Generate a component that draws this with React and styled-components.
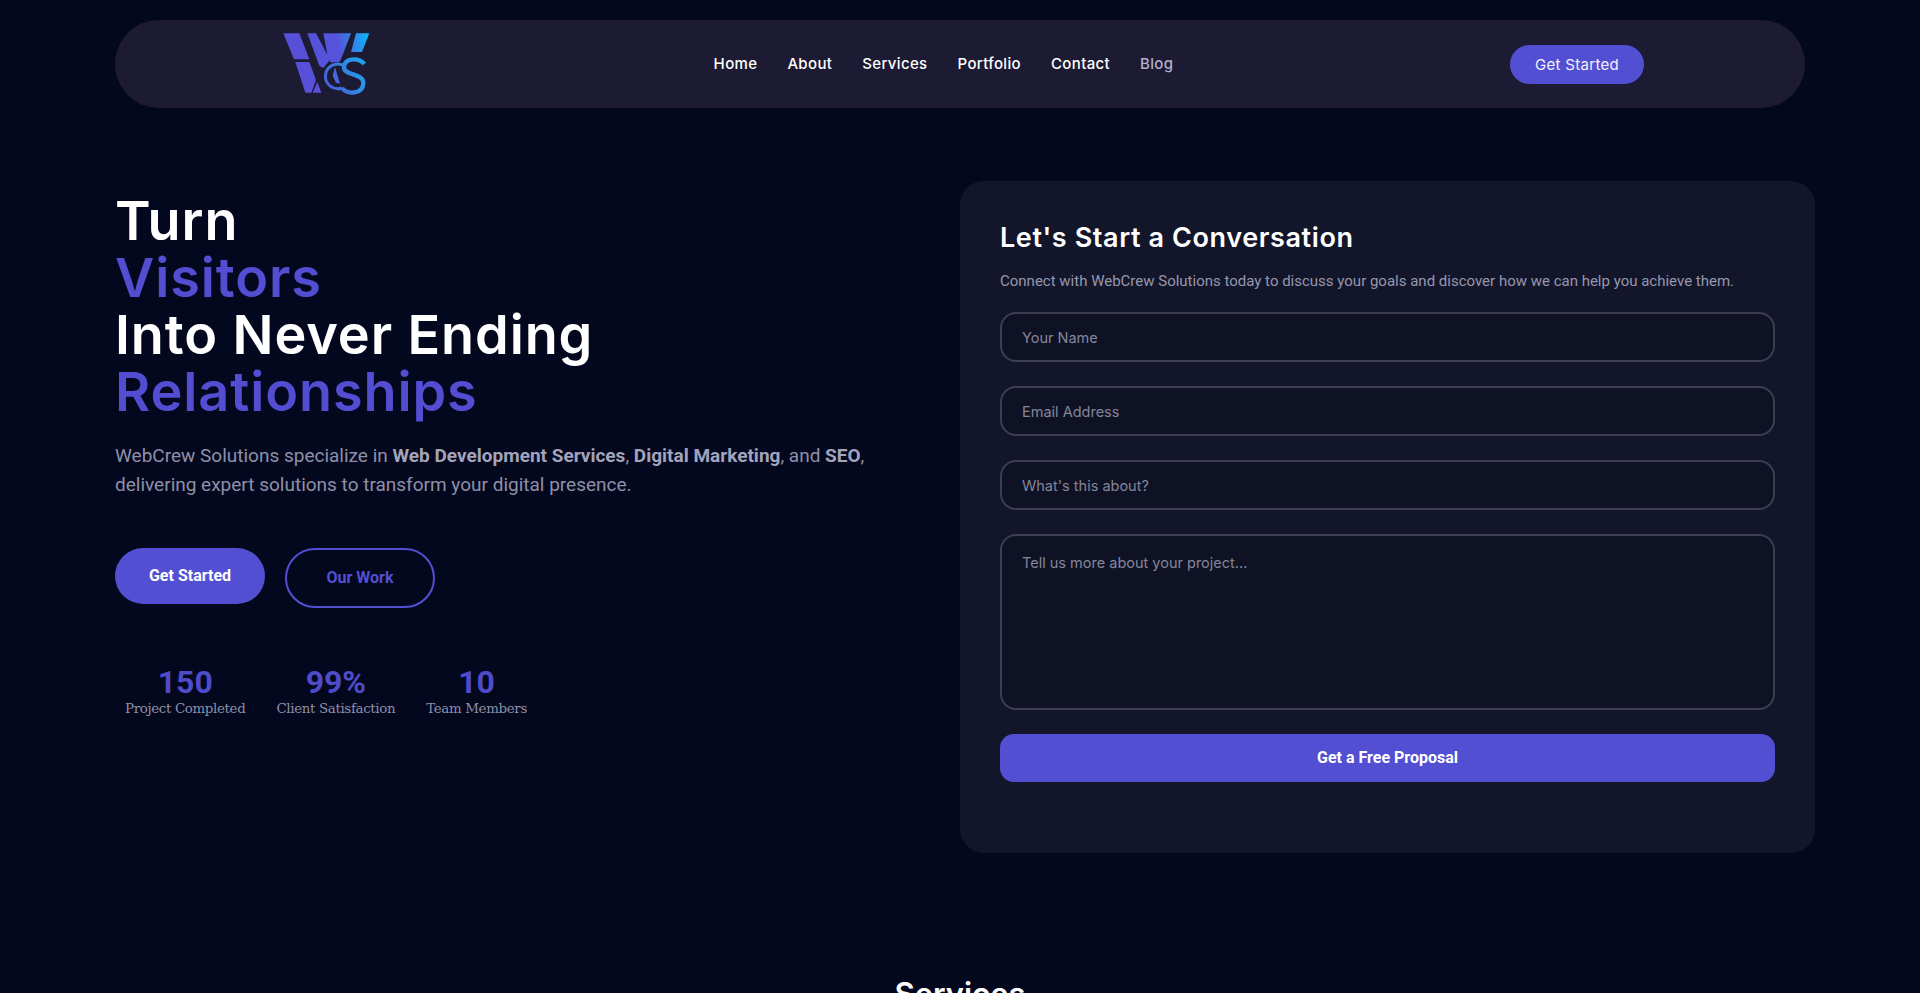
import React from "react";
import styled, { createGlobalStyle } from "styled-components";

const GlobalStyle = createGlobalStyle`
  * {
    box-sizing: border-box;
  }

  html,
  body {
    margin: 0;
    background: #03081f;
  }
`;

const Page = styled.div`
  height: 993px;
  overflow: hidden;
  background: #03081f;
  font-family: Roboto, sans-serif;
`;

const Navbar = styled.nav`
  height: 88px;
  margin: 20px 115px 0;
  padding: 0 161px 0 155px;
  display: flex;
  align-items: center;
  justify-content: space-between;
  background: #1c1b33;
  border-radius: 44px;
`;

const Logo = styled.svg`
  width: 110px;
  height: 80px;
`;

const Links = styled.ul`
  display: flex;
  gap: 30px;
  margin: -2px 0 0 -3px;
  padding: 0;
  list-style: none;
`;

const LinkItem = styled.li`
  font-family: Inter, sans-serif;
  font-size: 15px;
  font-weight: 500;
  letter-spacing: 0.35px;
  color: ${(p) => (p.$muted ? "#b0afc9" : "#fff")};
  cursor: pointer;
`;

const NavButton = styled.button`
  width: 134px;
  height: 39px;
  background: #534fd3;
  color: #f2f2fb;
  border: none;
  border-radius: 20px;
  font-family: Inter, sans-serif;
  font-size: 15px;
  letter-spacing: 0.3px;
  cursor: pointer;
`;

const Hero = styled.section`
  display: grid;
  grid-template-columns: 760px 855px;
  justify-content: space-between;
  margin-top: 73px;
  padding: 0 105px 0 115px;
`;

const Left = styled.div`
  padding-top: 11px;
`;

const Title = styled.h1`
  margin: 0;
  font-family: Inter, sans-serif;
  font-size: 54px;
  font-weight: 600;
  line-height: 57px;
  letter-spacing: 0.9px;
  color: #fff;
`;

const Accent = styled.span`
  color: #524dd1;
`;

const Intro = styled.p`
  margin: 21px 0 0;
  font-size: 19px;
  line-height: 29px;
  color: #8f90a8;

  b {
    font-weight: 700;
    color: #a3a4bb;
  }
`;

const Buttons = styled.div`
  display: flex;
  align-items: flex-start;
  gap: 20px;
  margin-top: 49px;
`;

const HeroButton = styled.button`
  width: 150px;
  height: ${(p) => (p.$outline ? "60px" : "56px")};
  padding: ${(p) => (p.$outline ? "0 0 2px" : "0 0 2px")};
  background: ${(p) => (p.$outline ? "transparent" : "#534fd3")};
  color: ${(p) => (p.$outline ? "#534fd3" : "#fff")};
  border: ${(p) => (p.$outline ? "2px solid #534fd3" : "none")};
  border-radius: 30px;
  font-family: Roboto, sans-serif;
  font-size: 16px;
  font-weight: 700;
  cursor: pointer;
`;

const Stats = styled.div`
  display: flex;
  gap: 31px;
  margin-top: 57px;
  padding-left: 10px;
`;

const Stat = styled.div`
  text-align: center;
`;

const StatNumber = styled.div`
  font-size: 32px;
  font-weight: 700;
  line-height: 34px;
  color: #4f4bc9;
`;

const StatLabel = styled.div`
  font-family: "DejaVu Serif", serif;
  font-size: 13.4px;
  line-height: 19px;
  letter-spacing: -0.35px;
  color: #8f90a8;
`;

const Card = styled.form`
  height: 672px;
  padding: 41px 40px 40px;
  background: #13162a;
  border-radius: 24px;
`;

const CardTitle = styled.h2`
  margin: 0;
  font-family: Inter, sans-serif;
  font-size: 27px;
  font-weight: 600;
  line-height: 32px;
  letter-spacing: 0.6px;
  color: #fff;
`;

const CardText = styled.p`
  margin: 16px 0 0;
  font-size: 15px;
  line-height: 22px;
  color: #9596ad;
`;

const Fields = styled.div`
  display: flex;
  flex-direction: column;
  gap: 24px;
  margin-top: 20px;
`;

const Input = styled.input`
  width: 100%;
  height: 50px;
  padding: 0 20px;
  background: #0f1224;
  border: 2px solid #3d3e54;
  border-radius: 16px;
  font-family: Inter, sans-serif;
  font-size: 14.5px;
  color: #fff;

  &::placeholder {
    color: #85869b;
    opacity: 1;
  }
`;

const TextArea = styled(Input).attrs({ as: "textarea" })`
  display: block;
  height: 176px;
  padding: 18px 20px;
  resize: none;
`;

const Submit = styled.button`
  width: 100%;
  height: 48px;
  margin-top: 24px;
  padding-bottom: 2px;
  background: #534fd3;
  color: #fff;
  border: none;
  border-radius: 14px;
  font-family: Roboto, sans-serif;
  font-size: 16px;
  font-weight: 700;
  cursor: pointer;
`;

const SectionTitle = styled.h2`
  margin: 119px 0 0;
  text-align: center;
  font-family: Inter, sans-serif;
  font-size: 31px;
  font-weight: 600;
  line-height: 44px;
  color: #fff;
`;

const WcsLogo = () => (
  <Logo viewBox="0 0 330 240" aria-label="WebCrew Solutions logo">
    <defs>
      <linearGradient id="wcs" gradientUnits="userSpaceOnUse" x1="40" y1="120" x2="300" y2="60">
        <stop offset="0" stopColor="#5a4ed8" />
        <stop offset="0.65" stopColor="#5454da" />
        <stop offset="1" stopColor="#10b4f6" />
      </linearGradient>
      <linearGradient id="wcs-round" gradientUnits="userSpaceOnUse" x1="165" y1="180" x2="285" y2="120">
        <stop offset="0" stopColor="#4a5edc" />
        <stop offset="1" stopColor="#1ea4ee" />
      </linearGradient>
    </defs>
    <g fill="url(#wcs)">
      <polygon points="40,28 88,28 118,106 72,106" />
      <polygon points="76,114 118,114 138,168 124,206 106,206" />
      <polygon points="112,28 138,28 172,92 160,28 243,28 212,108 196,130 178,110 160,132 148,125" />
      <polygon points="258,28 298,28 276,84 243,84" />
      <polygon points="128,206 142,174 154,206" />
    </g>
    <circle cx="200" cy="160" r="46" fill="#1c1b33" />
    <g fill="none" stroke="url(#wcs-round)">
      <path d="M226 128 A37 37 0 1 0 216 192" strokeWidth="9" />
      <path d="M283 120 C270 102 226 98 222 128 C219 156 282 146 280 178 C278 212 232 212 216 192" strokeWidth="13" />
    </g>
    <polygon points="195,129 210,179 198,176 188,155" fill="#4a68dc" />
  </Logo>
);

const App = () => {
  return (
    <Page>
      <GlobalStyle />
      <Navbar>
        <WcsLogo />
        <Links>
          <LinkItem>Home</LinkItem>
          <LinkItem>About</LinkItem>
          <LinkItem>Services</LinkItem>
          <LinkItem>Portfolio</LinkItem>
          <LinkItem>Contact</LinkItem>
          <LinkItem $muted>Blog</LinkItem>
        </Links>
        <NavButton>Get Started</NavButton>
      </Navbar>
      <Hero>
        <Left>
          <Title>
            Turn
            <br />
            <Accent>Visitors</Accent>
            <br />
            Into Never Ending
            <br />
            <Accent>Relationships</Accent>
          </Title>
          <Intro>
            WebCrew Solutions specialize in <b>Web Development Services</b>, <b>Digital Marketing</b>, and{" "}
            <b>SEO</b>, delivering expert solutions to transform your digital presence.
          </Intro>
          <Buttons>
            <HeroButton>Get Started</HeroButton>
            <HeroButton $outline>Our Work</HeroButton>
          </Buttons>
          <Stats>
            <Stat>
              <StatNumber>150</StatNumber>
              <StatLabel>Project Completed</StatLabel>
            </Stat>
            <Stat>
              <StatNumber>99%</StatNumber>
              <StatLabel>Client Satisfaction</StatLabel>
            </Stat>
            <Stat>
              <StatNumber>10</StatNumber>
              <StatLabel>Team Members</StatLabel>
            </Stat>
          </Stats>
        </Left>
        <Card>
          <CardTitle>Let's Start a Conversation</CardTitle>
          <CardText>
            Connect with WebCrew Solutions today to discuss your goals and discover how we can help you achieve them.
          </CardText>
          <Fields>
            <Input placeholder="Your Name" />
            <Input placeholder="Email Address" />
            <Input placeholder="What's this about?" />
            <TextArea placeholder="Tell us more about your project..." />
          </Fields>
          <Submit type="button">Get a Free Proposal</Submit>
        </Card>
      </Hero>
      <SectionTitle>Services</SectionTitle>
    </Page>
  );
};

export default App;
